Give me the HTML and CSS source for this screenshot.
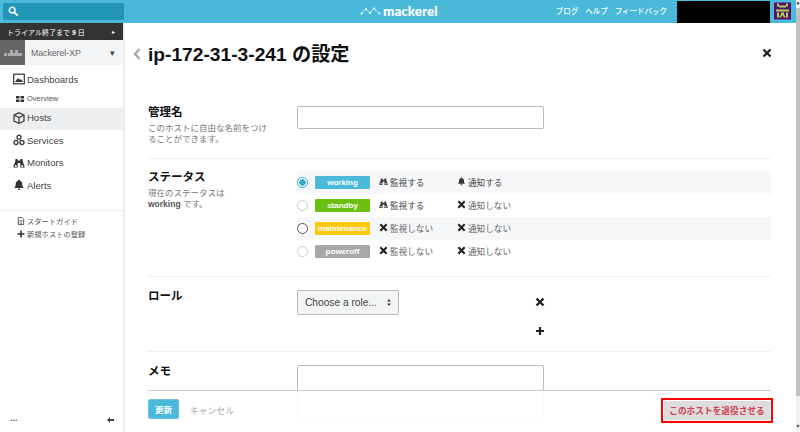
FILE: index.html
```html
<!DOCTYPE html>
<html lang="ja">
<head>
<meta charset="utf-8">
<title>ip-172-31-3-241 の設定</title>
<link rel="stylesheet" href="styles.css">
</head>
<body>
<div class="page">
<div class="app">
  <header class="topbar">
    <div class="search">
      <svg class="search-icon" viewBox="0 0 12 12"><circle cx="5" cy="5" r="3.4" fill="none" stroke="#fff" stroke-width="1.8"/><path d="M7.6 7.6 11 11" stroke="#fff" stroke-width="2.2" stroke-linecap="round"/></svg>
    </div>
    <div class="logo">
      <svg class="logo-mark" viewBox="0 0 21 8"><path d="M1.500 6.500 6 2l4 4 4-4.500 5.500 5" fill="none" stroke="#fff" stroke-width="1" stroke-dasharray="2.400 .8"/><g fill="#fff"><circle cx="1.500" cy="6.500" r="1"/><circle cx="6" cy="2" r="1"/><circle cx="10" cy="6" r="1"/><circle cx="14" cy="1.500" r="1"/><circle cx="19.500" cy="6.500" r="1"/></g></svg>
      <span>mackerel</span>
    </div>
    <nav class="topnav"><a>ブログ</a><a>ヘルプ</a><a>フィードバック</a></nav>
    <div class="account"></div>
    <svg class="avatar" viewBox="0 0 17 17"><rect width="17" height="17" fill="#5a0f6e"/><path d="M3 1h2v2h7V1h2v3h-2V5H5v-1H3zM2 7h13v2H2zM3 10h2v5H3zM12 10h2v5h-2zM7 10h3v2l2 3h-2l-1.500-2.500L7 15H5l2-3z" fill="#a8d84a"/></svg>
  </header>
  <div class="body">
    <aside class="sidebar">
      <div class="trial"><span>トライアル終了まで <b>9</b> 日</span><span class="trial-arrow">▸</span></div>
      <div class="org">
        <div class="org-logo"><svg viewBox="0 0 18 6" width="18" height="6"><path d="M0 3h3v3H0zM4 3h2V0h3v3h2V0h3v3h4v3H4z" fill="#c4c4c4" fill-opacity=".75"/></svg></div>
        <div class="org-name"><span>Mackerel-XP</span><span class="caret">▾</span></div>
      </div>
      <ul class="menu">
        <li class="menu-item"><svg class="mi" viewBox="0 0 12 12"><rect x=".7" y="1.200" width="10.600" height="9.600" fill="none" stroke="#333" stroke-width="1.200"/><path d="M2 9l3-4 2 2 1-1 2 3z" fill="#333"/></svg>Dashboards</li>
        <li class="menu-sub"><svg class="si" viewBox="0 0 8 8"><path d="M0 1h3.500v2.500H0zM4.500 1H8v2.500H4.500zM0 4.500h3.500V7H0zM4.500 4.500H8V7H4.500z" fill="#333"/></svg>Overview</li>
        <li class="menu-item active"><svg class="mi" viewBox="0 0 12 12"><path d="M6 .8 11 3v6l-5 2.300L1 9V3z" fill="none" stroke="#444" stroke-width="1.300"/><path d="M1.500 3.300 6 5.500l4.500-2.200M6 5.500V11" fill="none" stroke="#444" stroke-width="1.300"/></svg>Hosts</li>
        <li class="menu-item"><svg class="mi" viewBox="0 0 12 12"><g fill="none" stroke="#444" stroke-width="1.400"><circle cx="6" cy="3.200" r="2"/><circle cx="3" cy="8.500" r="2"/><circle cx="9" cy="8.500" r="2"/></g></svg>Services</li>
        <li class="menu-item"><svg class="mi" viewBox="0 0 12 12"><use href="#bino"/></svg>Monitors</li>
        <li class="menu-item"><svg class="mi" viewBox="0 0 12 12"><use href="#bell"/></svg>Alerts</li>
      </ul>
      <ul class="guide">
        <li><svg class="gi" viewBox="0 0 8 9"><path d="M1 .5h4l2 2v6H1z" fill="none" stroke="#444"/><path d="M2.500 4h3M2.500 5.500h3M2.500 7h3" stroke="#444" stroke-width=".7"/></svg>スタートガイド</li>
        <li><svg class="gi" viewBox="0 0 8 8"><path d="M4 .5v7M.5 4h7" stroke="#333" stroke-width="1.600"/></svg>新規ホストの登録</li>
      </ul>
      <div class="side-foot"><span class="dots">...</span><svg class="collapse" viewBox="0 0 7 6"><path d="M0 3l3-3v2h4v2H3v2z" fill="#444"/></svg></div>
    </aside>
    <main class="main">
      <div class="title-row">
        <svg class="back" viewBox="0 0 8 12"><path d="M6.500 1 2 6l4.500 5" fill="none" stroke="#aaa" stroke-width="2.400"/></svg>
        <h1>ip-172-31-3-241 の設定</h1>
        <svg class="close" viewBox="0 0 10 10"><use href="#x"/></svg>
      </div>
      <section class="row row-name">
        <div class="label"><h2>管理名</h2><p>このホストに自由な名前をつけることができます。</p></div>
        <div class="field"><input class="text-input" type="text"></div>
      </section>
      <section class="row row-status">
        <div class="label"><h2>ステータス</h2><p>現在のステータスは<br><b>working</b> です。</p></div>
        <div class="statuses">
          <div class="status striped"><span class="radio checked"></span><span class="badge working">working</span><span class="col1 on"><svg class="ic" viewBox="0 0 12 12"><use href="#bino"/></svg>監視する</span><span class="col2 on"><svg class="ic" viewBox="0 0 12 12"><use href="#bell"/></svg>通知する</span></div>
          <div class="status"><span class="radio"></span><span class="badge standby">standby</span><span class="col1 on"><svg class="ic" viewBox="0 0 12 12"><use href="#bino"/></svg>監視する</span><span class="col2"><svg class="ic" viewBox="0 0 10 10"><use href="#x"/></svg>通知しない</span></div>
          <div class="status striped"><span class="radio focus"></span><span class="badge maintenance">maintenance</span><span class="col1"><svg class="ic" viewBox="0 0 10 10"><use href="#x"/></svg>監視しない</span><span class="col2"><svg class="ic" viewBox="0 0 10 10"><use href="#x"/></svg>通知しない</span></div>
          <div class="status"><span class="radio"></span><span class="badge poweroff">poweroff</span><span class="col1"><svg class="ic" viewBox="0 0 10 10"><use href="#x"/></svg>監視しない</span><span class="col2"><svg class="ic" viewBox="0 0 10 10"><use href="#x"/></svg>通知しない</span></div>
        </div>
      </section>
      <section class="row row-role">
        <div class="label"><h2>ロール</h2></div>
        <div class="role-field">
          <div class="role-select"><span>Choose a role...</span><svg class="updown" viewBox="0 0 4 7"><path d="M2 0l1.800 2.500H.2zM2 7 .2 4.500h3.600z" fill="#333"/></svg></div>
          <div class="role-actions">
            <svg class="act" viewBox="0 0 10 10"><use href="#x"/></svg>
            <svg class="act" viewBox="0 0 10 10"><path d="M5 1v8M1 5h8" stroke="#222" stroke-width="2.200"/></svg>
          </div>
        </div>
      </section>
      <section class="row row-memo">
        <div class="label"><h2>メモ</h2></div>
        <div class="field"><textarea class="memo-input"></textarea></div>
      </section>
      <footer class="actionbar">
        <button class="btn-update" type="button">更新</button>
        <a class="cancel">キャンセル</a>
        <button class="btn-retire" type="button">このホストを退役させる</button>
      </footer>
    </main>
  </div>
</div>
<div class="scrollbar"><span class="sb-up"></span><span class="sb-thumb"></span><span class="sb-down"></span></div>
</div>
<svg class="defs" width="0" height="0">
  <defs>
    <symbol id="x" viewBox="0 0 10 10"><path d="M1.500 1.500l7 7M8.500 1.500l-7 7" stroke="#222" stroke-width="2.400"/></symbol>
    <symbol id="bell" viewBox="0 0 12 12"><path d="M6 .8c.6 0 1 .4 1 .9 1.700.5 2.300 1.900 2.300 3.500 0 1.800.6 2.900 1.500 3.700H1.200c.9-.8 1.500-1.900 1.500-3.700 0-1.600.6-3 2.300-3.500 0-.5.400-.9 1-.9zM4.700 9.700h2.600c0 .8-.6 1.400-1.300 1.400s-1.300-.6-1.300-1.400z" fill="#333"/></symbol>
    <symbol id="bino" viewBox="0 0 12 12"><path d="M2.500 2h2.200v1.500h2.600V2h2.200l.4 3 1.600 4v1.500H7.300V6H4.700v4.500H.5V9l1.600-4z" fill="#333"/><circle cx="2.800" cy="9" r="1" fill="#fff"/><circle cx="9.200" cy="9" r="1" fill="#fff"/></symbol>
  </defs>
</svg>
</body>
</html>
```

FILE: styles.css
```css
* { box-sizing: border-box; }
html, body { margin: 0; height: 100%; overflow: hidden; }
body { font-family: "Liberation Sans", "Noto Sans CJK JP", sans-serif; color: #333; background: #fff; }
ul { list-style: none; margin: 0; padding: 0; }
h1, h2, p { margin: 0; }
.defs { position: absolute; }

.page { display: flex; height: 432px; }
.app { flex: 1; min-width: 0; display: flex; flex-direction: column; }

.topbar { flex: 0 0 22px; display: flex; align-items: center; background: #4bb9d9; padding-left: 3px; position: relative; }
.search { width: 121px; height: 17px; margin-top: -1px; background: #2095b6; border-radius: 2px; display: flex; align-items: center; padding-left: 5px; }
.search-icon { width: 10px; height: 10px; }
.logo { position: absolute; left: 360px; top: 1px; display: flex; align-items: center; gap: 2px; color: #fff; font-family: "Lato", sans-serif; font-weight: 900; font-size: 13.500px; line-height: 20px; }
.logo-mark { width: 21px; height: 8px; }
.topnav { margin-left: auto; display: flex; gap: 7px; color: #fff; font-size: 7.500px; font-weight: 500; margin-right: 10px; margin-top: -3px; padding-left: 1px; }
.account { width: 93px; height: 22px; margin-top: 1px; align-self: flex-start; background: #000; }
.avatar { width: 17px; height: 18px; margin: -2px 5px 0 4px; }

.body { flex: 1; display: flex; min-height: 0; }

.sidebar { width: 125px; flex: none; border-right: 2px solid #eee; display: flex; flex-direction: column; }
.trial { height: 17px; background: #333; color: #fff; font-size: 7px; display: flex; align-items: center; justify-content: space-between; padding: 0 8px 0 7px; white-space: nowrap; }
.trial-arrow { font-size: 6px; }
.org { height: 25px; display: flex; }
.org-logo { width: 25px; background: #666; display: flex; align-items: center; justify-content: center; }
.org-name { flex: 1; background: #f3f4f6; display: flex; align-items: center; justify-content: space-between; padding: 0 8px 0 6px; font-size: 8.700px; color: #666; }
.caret { font-size: 9px; color: #444; }

.menu { padding-top: 4px; }
.menu-item { height: 22.500px; display: flex; align-items: center; font-size: 9.500px; color: #444; padding: 0 0 2px 13px; }
.menu-sub { height: 16px; display: flex; align-items: center; font-size: 7.500px; color: #555; padding: 0 0 2px 16px; }
.menu-item.active { background: #eeeff1; }
.mi { width: 12px; height: 12px; margin-right: 2px; }
.si { width: 8px; height: 8px; margin-right: 3px; }

.guide { margin-top: 12px; border-top: 1px solid #eee; padding: 4px 0 0 17px; font-size: 7.300px; color: #555; }
.guide li { height: 13px; display: flex; align-items: center; }
.gi { width: 8px; height: 8px; margin-right: 2px; }

.side-foot { margin-top: auto; height: 15px; display: flex; justify-content: space-between; align-items: flex-start; padding: 0 9px 0 10px; }
.dots { font-size: 9px; font-weight: 700; color: #666; line-height: 6px; margin-top: -2px; }
.collapse { width: 7px; height: 6px; }

.main { flex: 1; min-width: 0; position: relative; padding: 0 25px 0 23px; overflow: hidden; }
.title-row { height: 38px; margin-top: 11px; display: flex; align-items: center; }
.back { width: 8px; height: 12px; margin-right: 7px; margin-left: -15px; position: relative; top: 1px; flex: none; }
h1 { font-size: 19.200px; font-weight: 700; color: #111; flex: 1; white-space: nowrap; }
.close { width: 10px; height: 10px; margin-right: -1px; }
.row { display: flex; border-bottom: 1px solid #f0f0f0; }
.row h2 { font-size: 11.500px; font-weight: 700; color: #111; line-height: 17px; }
.row p { font-size: 8.500px; line-height: 11px; color: #777; margin-top: 2px; }
.row p b { color: #555; }
.label { width: 149px; flex: none; padding-right: 23px; }
.field { flex: 1; }

.row-name { padding-top: 32px; height: 87px; }
.text-input { width: 247px; height: 23px; margin-top: 2px; border: 1px solid #bbb; border-radius: 2px; background: #fff; display: block; }
.row-status { height: 118px; padding-top: 10px; }
.row-role { height: 75px; padding-top: 11px; }
.row-memo { border-bottom: none; padding-top: 11px; }

.statuses { flex: 1; padding-top: 2px; }
.status { height: 23px; display: flex; align-items: center; font-size: 8.600px; color: #666; }
.status.striped { background: #f6f7f9; }
.radio { width: 11px; height: 11px; border-radius: 50%; border: 1px solid #ccc; background: #fff; margin-right: 7px; flex: none; }
.radio.checked { border-color: #3aa8cc; background: radial-gradient(circle, #3aa8cc 0 3px, #fff 3.500px); }
.radio.focus { border-color: #555; }
.badge { width: 55px; height: 13px; border-radius: 1px; color: #fff; font-size: 8px; font-weight: 700; line-height: 13px; text-align: center; flex: none; margin-right: 9px; }
.working { background: #4bb9d9; }
.standby { background: #6cbf10; }
.maintenance { background: #fec810; }
.poweroff { background: #a8a8a8; }
.col1, .col2 { display: flex; align-items: center; flex: none; margin-top: -2px; }
.col1 { width: 78px; }
.on { color: #444; }
.ic { width: 9px; height: 9px; margin-right: 2px; }

.role-field { display: flex; flex: 1; }
.role-select { width: 102px; height: 25px; margin-top: 2px; border: 1px solid #bbb; border-radius: 2px; background: #f3f4f6; display: flex; align-items: center; justify-content: space-between; padding: 0 7px; font-size: 10.200px; color: #444; }
.updown { width: 4px; height: 7px; }
.role-actions { margin-left: 136px; display: flex; flex-direction: column; gap: 19px; padding-top: 9px; }
.act { width: 10px; height: 10px; display: block; }
.memo-input { display: block; width: 247px; height: 53px; margin: 2px 0 0; border: 1px solid #bbb; border-radius: 2px; background: #fff; resize: none; }

.actionbar { position: absolute; left: 23px; right: 25px; bottom: 0; height: 42px; border-top: 1px solid #ccc; background: rgba(255,255,255,.93); display: flex; align-items: center; font-size: 8.800px; padding-bottom: 3px; }
.btn-update { width: 31px; height: 20px; margin-top: -2px; border: 1px solid #6cc4de; border-radius: 2px; background: #4bb9d9; color: #fff; font: 700 8.500px "Liberation Sans", "Noto Sans CJK JP", sans-serif; padding: 0; }
.cancel { color: #aaa; margin-left: 11px; }
.btn-retire { margin-left: auto; width: 112px; height: 25px; border: 2px solid #f00; background: #ddd; color: #d0404f; font: 700 8.700px "Liberation Sans", "Noto Sans CJK JP", sans-serif; padding: 0; box-shadow: inset 0 0 0 1px #fff; margin-right: -2px; }

.scrollbar { flex: 0 0 4px; background: #f1f1f1; display: flex; flex-direction: column; align-items: stretch; }
.sb-up { height: 8px; background: radial-gradient(circle at 50% 40%, #666 0 1.200px, transparent 1.700px); }
.sb-thumb { height: 388px; background: #c1c1c1; }
.sb-down { margin-top: auto; height: 10px; background: radial-gradient(circle at 50% 40%, #666 0 1.200px, transparent 1.700px); }
```
